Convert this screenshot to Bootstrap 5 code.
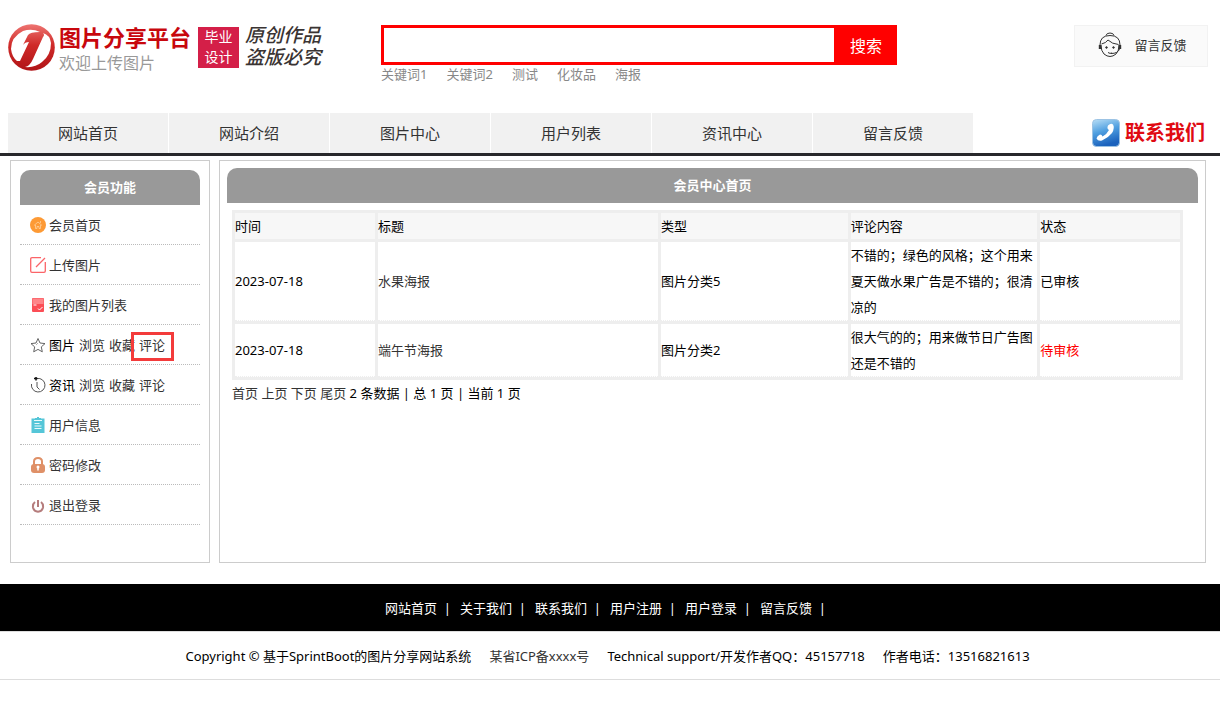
<!DOCTYPE html>
<html lang="zh-CN">
<head>
<meta charset="utf-8">
<meta name="viewport" content="width=device-width, initial-scale=1">
<title>图片分享平台</title>
<link href="https://cdn.jsdelivr.net/npm/bootstrap@5.3.0/dist/css/bootstrap.min.css" rel="stylesheet">
<style>
body { font: 13px/26px "Noto Sans", "Noto Sans CJK SC", sans-serif; color: #000; background: #fff; }
a { color: #333; text-decoration: none; }
a:hover { color: #f00; }
.site-top { padding: 24px 12px 0 8px; height: 113px; }
.logo-area { flex: 0 0 373px; }
.logo-name { font-size: 22px; line-height: 27px; font-weight: 700; color: #c8070d; }
.logo-sub { font-size: 16px; line-height: 24px; color: #999; }
.logo-tag { width: 41px; height: 41px; margin: 3px 0 0 7px; background: #d41f48; color: #fff; font-size: 14px; line-height: 20px; }
.logo-script { margin-left: 6px; font-size: 19px; font-style: italic; font-weight: 500; color: #3a3433; }
.logo-script div { line-height: 22px; }
.search-area { flex: 0 1 516px; }
.search-form { border: 3px solid #f00; height: 40px; margin-top: 1px; }
.search-form input { border: 0; outline: 0; min-width: 0; }
.search-form button { border: 0; background: #f00; color: #fff; font-size: 16px; width: 60px; padding: 2px 0 0 4px; }
.keywords { gap: 19px; line-height: 18px; }
.keywords a { color: #888; }
.feedback { width: 134px; height: 42px; border: 1px solid #f2f2f2; background: #fafafa; gap: 11px; margin-top: 1px; padding: 0 0 3px 2px; }
.main-nav { border-bottom: 3px solid #28282b; padding: 0 12px 0 8px; height: 43px; }
.tab-row { gap: 1px; }
.main-nav .tab { flex: 0 1 160px; background: #f1f1f1; font-size: 15px; line-height: 40px; text-align: center; }
.contact { font-size: 20px; font-weight: 700; color: #e00a12; gap: 4px; margin-right: 3px; }
.page-body { padding: 4px 14px 0 10px; gap: 9px; }
.panel { border: 1px solid #ccc; min-height: 403px; }
.side-panel { flex: 0 0 200px; padding: 9px; }
.content-panel { flex: 1 1 0; min-width: 0; padding: 7px; }
.panel-title { background: #999; color: #fff; font-size: 13px; font-weight: 700; line-height: 35px; text-align: center; border-radius: 10px 10px 0 0; margin: 0; }
.side-item { height: 40px; border-bottom: 1px dotted #bbb; padding: 1px 0 0 10px; gap: 4px; }
.side-item svg { flex: none; margin-right: -1px; }
.marker { position: absolute; inset: 0 -9px -3px -8px; border: 3px solid #f33b3b; pointer-events: none; }
.content-inner { padding: 7px 5px 0; }
.records { width: 99%; table-layout: fixed; border-collapse: separate; border-spacing: 3px; background: #eee; }
.records th { background: #f7f7f7; font-weight: 400; padding: 0; }
.records td { background: #fff; border-bottom: 1px dotted #eee; padding: 0; }
.records .pending { color: #f00; }
.foot-nav { background: #000; color: #fff; height: 47px; margin-top: 21px; }
.foot-nav a { color: #fff; }
.foot-nav span { width: 75px; white-space: pre; }
.copyright { border-top: 1px solid #ddd; border-bottom: 1px solid #ddd; height: 49px; gap: 18px; padding-right: 5px; }
</style>
</head>
<body>
<header class="site-top d-flex">
  <div class="logo-area d-flex align-items-start">
    <svg width="47" height="47" viewBox="0 0 47 47" aria-hidden="true">
      <defs>
        <linearGradient id="ring" x1="0" y1="0" x2="0" y2="1"><stop offset="0" stop-color="#ee7572"/><stop offset=".45" stop-color="#cf2a28"/><stop offset="1" stop-color="#b01417"/></linearGradient>
      </defs>
      <circle cx="23.500" cy="23.500" r="23.300" fill="url(#ring)"/>
      <path d="M32 8Q24 4 15 7Q3 13 3 25Q4 33 9 37L12 37L21 18Q17 18 15 21L20 11Q22 8 32 8Z" fill="#fff"/>
      <path d="M35 9Q42 11 43 19Q43 31 34 38Q27 44 17 43Q22 42 25 35L35 13Q37 11 35 9Z" fill="#fff"/>
    </svg>
    <div class="ms-1">
      <div class="logo-name">图片分享平台</div>
      <div class="logo-sub">欢迎上传图片</div>
    </div>
    <div class="logo-tag text-center">毕业<br>设计</div>
    <div class="logo-script"><div>原创作品</div><div>盗版必究</div></div>
  </div>
  <div class="search-area">
    <form class="search-form d-flex" role="search" onsubmit="return false">
      <input type="text" class="flex-grow-1" aria-label="搜索">
      <button type="submit">搜索</button>
    </form>
    <div class="keywords d-flex">
      <a href="#">关键词1</a><a href="#">关键词2</a><a href="#">测试</a><a href="#">化妆品</a><a href="#">海报</a>
    </div>
  </div>
  <a href="#" class="feedback d-flex align-items-center justify-content-center ms-auto">
    <svg width="26" height="28" viewBox="0 0 26 28" fill="none" stroke="#333" aria-hidden="true">
      <path d="M9 4.500Q9.500 2 13 2Q16.500 2 17 4.500M3 14Q3 4.500 13 4.500Q23 4.500 23 14M4 14Q4 20 7 23Q13 28 19 23Q22 20 22 14M4.500 13Q9 12 11 9Q15 13 21.500 13.500"/>
      <path d="M3 14v4M23 14v4" stroke-width="2.400"/>
      <path d="M22.500 18Q21 22.500 14 22.500M11 21.500q2 1.500 4 .5"/>
      <circle cx="9.500" cy="16.500" r=".8" fill="#333"/><circle cx="16.500" cy="16.500" r=".8" fill="#333"/>
    </svg>
    留言反馈
  </a>
</header>
<nav class="main-nav d-flex">
  <div class="tab-row d-flex flex-grow-1">
    <a class="tab" href="#">网站首页</a><a class="tab" href="#">网站介绍</a><a class="tab" href="#">图片中心</a><a class="tab" href="#">用户列表</a><a class="tab" href="#">资讯中心</a><a class="tab" href="#">留言反馈</a>
  </div>
  <a href="#" class="contact d-flex align-items-center flex-shrink-0">
    <svg width="30" height="30" viewBox="0 0 30 30" aria-hidden="true">
      <defs><linearGradient id="tel" x1="0" y1="0" x2=".3" y2="1"><stop offset="0" stop-color="#b9dff6"/><stop offset=".5" stop-color="#4f9fe0"/><stop offset="1" stop-color="#1b62bd"/></linearGradient></defs>
      <rect x="1.500" y="1.500" width="27" height="27" rx="4" fill="url(#tel)" stroke="#9cc3e4"/>
      <path d="M17 7.500Q20 4.500 22 6.500Q24 10 21 15Q17 20 11 22.500Q7 23.500 5.500 20.500Q6 18 9 16.500Q11 16.500 11.500 18.500Q16 16 18 12Q15.500 10.500 17 7.500Z" fill="#fff"/>
    </svg>
    联系我们
  </a>
</nav>

<main class="page-body d-flex">
  <aside class="panel side-panel">
    <h2 class="panel-title">会员功能</h2>
    <ul class="list-unstyled mb-0">
      <li class="side-item d-flex align-items-center">
        <svg width="16" height="16" viewBox="0 0 16 16" aria-hidden="true"><circle cx="8" cy="8" r="8" fill="#fd9a35"/><path d="M4 8.500L8 5l4 3.500M5.500 8v3.500h1.500v-2h2v2h1.500V8M10.500 4v2" fill="none" stroke="#ffd09a" stroke-width=".8"/></svg>
        <a href="#">会员首页</a></li>
      <li class="side-item d-flex align-items-center">
        <svg width="16" height="16" viewBox="0 0 16 16" fill="none" stroke="#fb6468" stroke-width="1.300" aria-hidden="true"><path d="M11 .700H2Q.700 .700 .700 2V14Q.700 15.300 2 15.300H14Q15.300 15.300 15.300 14V5M15 1L6 10"/></svg>
        <a href="#">上传图片</a></li>
      <li class="side-item d-flex align-items-center">
        <svg width="16" height="16" viewBox="0 0 16 16" aria-hidden="true"><rect x="2" y="1" width="12" height="14" rx="1" fill="#fb4e56"/><rect x="2.500" y="1.500" width="11" height="5.500" fill="#fe8589"/><path d="M3.500 8h3M8 11.500l1.500 1.500 3-3" fill="none" stroke="#fff"/></svg>
        <a href="#">我的图片列表</a></li>
      <li class="side-item d-flex align-items-center">
        <svg width="16" height="16" viewBox="0 0 16 16" fill="none" stroke="#555" stroke-width=".9" stroke-linejoin="round" aria-hidden="true"><path d="M8 1.500L10 6l5 .6-3.700 3.300 1 4.900L8 12.400l-4.300 2.400 1-4.900L1 6.600 6 6Z"/><path d="M6 8l2-2" stroke="#aaa"/></svg>
        <span>图片</span><a href="#">浏览</a><a href="#">收藏</a><a href="#" class="position-relative">评论<span class="marker"></span></a></li>
      <li class="side-item d-flex align-items-center">
        <svg width="16" height="16" viewBox="0 0 16 16" fill="none" stroke="#555" aria-hidden="true"><path d="M7 1.500A6.800 6.800 0 1 1 1.500 7M7 5v5l2.500 2.500"/><path d="M4 1.500h3.500M6 0v3.500" stroke="#111" stroke-width="1.500"/></svg>
        <span>资讯</span><a href="#">浏览</a><a href="#">收藏</a><a href="#">评论</a></li>
      <li class="side-item d-flex align-items-center">
        <svg width="16" height="16" viewBox="0 0 16 16" aria-hidden="true"><path d="M1.500 1.500H5V1H7V0H9V1H11V1.500H14.500V16H1.500Z" fill="#55c6d8"/><path d="M4 3.500h8M4.500 6.500h5M4.500 9h7M4.500 11.500h7" stroke="#e8fafc"/></svg>
        <a href="#">用户信息</a></li>
      <li class="side-item d-flex align-items-center">
        <svg width="16" height="16" viewBox="0 0 16 16" aria-hidden="true"><path d="M4 8V4.500Q4 1 8 1Q12 1 12 4.500V8" fill="none" stroke="#df9067" stroke-width="2"/><rect x="1" y="7" width="14" height="9" rx="3" fill="#df9067"/><circle cx="8" cy="10" r="1.500" fill="#fff"/><path d="M8 10v3.500" stroke="#fff" stroke-width="1.500"/></svg>
        <a href="#">密码修改</a></li>
      <li class="side-item d-flex align-items-center">
        <svg width="16" height="16" viewBox="0 0 16 16" fill="none" stroke="#b57c7c" stroke-width="2" aria-hidden="true"><path d="M5 5Q2.500 7 3 10.500Q4 14.500 8 14.800Q12 14.500 13 10.500Q13.500 7 11 5M8 3v7"/></svg>
        <a href="#">退出登录</a></li>
    </ul>
  </aside>
  <section class="panel content-panel">
    <h1 class="panel-title">会员中心首页</h1>
    <div class="content-inner">
      <table class="records">
        <colgroup><col style="width:15%"><col style="width:30%"><col style="width:20%"><col style="width:20%"><col style="width:15%"></colgroup>
        <thead><tr><th>时间</th><th>标题</th><th>类型</th><th>评论内容</th><th>状态</th></tr></thead>
        <tbody>
          <tr><td>2023-07-18</td><td><a href="#">水果海报</a></td><td>图片分类5</td><td>不错的；绿色的风格；这个用来夏天做水果广告是不错的；很清凉的</td><td>已审核</td></tr>
          <tr><td>2023-07-18</td><td><a href="#">端午节海报</a></td><td>图片分类2</td><td>很大气的的；用来做节日广告图还是不错的</td><td class="pending">待审核</td></tr>
        </tbody>
      </table>
      <div><a href="#">首页</a> <a href="#">上页</a> <a href="#">下页</a> <a href="#">尾页</a> 2 条数据 | 总 1 页 | 当前 1 页</div>
    </div>
  </section>
</main>

<footer>
  <div class="foot-nav d-flex align-items-center justify-content-center">
    <span><a href="#">网站首页</a>  |</span><span><a href="#">关于我们</a>  |</span><span><a href="#">联系我们</a>  |</span><span><a href="#">用户注册</a>  |</span><span><a href="#">用户登录</a>  |</span><span><a href="#">留言反馈</a>  |</span>
  </div>
  <div class="copyright d-flex align-items-center justify-content-center">
    <span>Copyright © 基于SprintBoot的图片分享网站系统</span><a href="#">某省ICP备xxxx号</a><span>Technical support/开发作者QQ：45157718</span><span>作者电话：13516821613</span>
  </div>
</footer>
<script src="https://cdn.jsdelivr.net/npm/bootstrap@5.3.0/dist/js/bootstrap.bundle.min.js"></script>
</body>
</html>
